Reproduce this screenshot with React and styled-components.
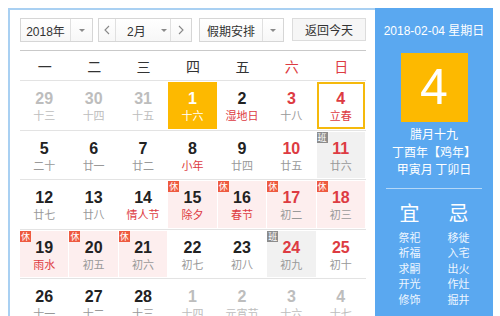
import React from 'react'
import styled, { createGlobalStyle } from 'styled-components'

const GlobalStyle = createGlobalStyle`
  html, body {
    margin: 0;
    padding: 0;
    overflow: hidden;
    background: #fff;
  }
  body {
    font-family: "Liberation Sans", "Noto Sans CJK SC", sans-serif;
    color: #333;
  }
`

const RED = '#dd3b42'
const BLUE = '#5aa8f0'
const ORANGE = '#fdb900'

const Page = styled.div`
  padding: 8px 0 0 8px;
  height: 316px;
  box-sizing: border-box;
`

const Frame = styled.div`
  display: flex;
  align-items: stretch;
  height: 100%;
`

const LeftPanel = styled.section`
  width: 367px;
  box-sizing: border-box;
  border-top: 2px solid #a9d0f2;
  border-left: 2px solid #a9d0f2;
  padding: 8px 9px 0 10px;
  background: #fff;
`

const RightPanel = styled.aside`
  width: 118px;
  background: ${BLUE};
  color: #fff;
  display: flex;
  flex-direction: column;
  align-items: center;
  padding-top: 15px;
  box-sizing: border-box;
  font-family: "Liberation Sans", "Noto Sans CJK SC", sans-serif;
`

const Toolbar = styled.div`
  display: flex;
  height: 24px;
  padding-bottom: 8px;
  border-bottom: 1px solid #c9c9c9;
`

const SelectBox = styled.div`
  display: flex;
  width: ${p => p.$w}px;
  margin-right: ${p => p.$mr || 0}px;
  box-sizing: border-box;
  border: 1px solid #d6d6d6;
  background: linear-gradient(#ffffff, #f7f7f7);
  font-size: 12px;
  color: #333;
`

const Part = styled.div`
  display: flex;
  align-items: center;
  justify-content: ${p => p.$justify || 'center'};
  width: ${p => (p.$w ? p.$w + 'px' : 'auto')};
  flex: ${p => (p.$w ? 'none' : 1)};
  padding: ${p => p.$pad || 0};
  border-right: ${p => (p.$sep ? '1px solid #e0e0e0' : 'none')};
  font-family: ${p => (p.$cjk ? '"Noto Sans CJK SC", sans-serif' : 'inherit')};
  box-sizing: border-box;
`

const Caret = styled.span`
  width: 0;
  height: 0;
  border-left: 3px solid transparent;
  border-right: 3px solid transparent;
  border-top: 3px solid #8a8a8a;
  margin-left: ${p => p.$ml || 0}px;
`

const TodayButton = styled.button`
  width: 74px;
  height: 23px;
  margin-top: 0;
  border: 1px solid #dcdcdc;
  background: #f6f6f6;
  font-family: "Noto Sans CJK SC", sans-serif;
  font-size: 12px;
  color: #333;
  padding: 0;
`

const WeekHead = styled.div`
  display: grid;
  grid-template-columns: repeat(7, 1fr);
  height: 30px;
  border-bottom: 1px solid #e3e3e3;
  box-sizing: border-box;
`

const WeekName = styled.div`
  display: flex;
  align-items: center;
  justify-content: center;
  font-family: "Noto Sans CJK SC", sans-serif;
  font-size: 14px;
  color: ${p => (p.$red ? RED : '#333')};
`

const Row = styled.div`
  display: grid;
  grid-template-columns: repeat(7, 1fr);
  height: 49.5px;
  border-bottom: 1px solid #e3e3e3;
  box-sizing: border-box;
`

const Cell = styled.div`
  padding: 1px 1px 1px 0;
  box-sizing: border-box;
`

const bgFor = p => {
  if (p.$sel) return ORANGE
  if (p.$badge === '休') return '#fdeeee'
  if (p.$badge === '班') return '#f1f1f1'
  return 'transparent'
}

const CellInner = styled.div`
  position: relative;
  height: 100%;
  box-sizing: border-box;
  background: ${bgFor};
  border: ${p => (p.$today ? '2px solid #f5b90c' : 'none')};
  display: flex;
  flex-direction: column;
  align-items: center;
  padding-top: ${p => (p.$today ? 6 : 8)}px;
`

const DayNum = styled.div`
  font-size: 16px;
  line-height: 18px;
  font-weight: 700;
  color: ${p => p.$color};
`

const Lunar = styled.div`
  font-family: "Noto Sans CJK SC", sans-serif;
  font-size: 11px;
  line-height: 15px;
  color: ${p => p.$color};
`

const Badge = styled.span`
  position: absolute;
  top: 0;
  left: 0;
  width: 11px;
  height: 11px;
  background: ${p => (p.$type === '休' ? '#ee5a40' : '#8c8c8c')};
  color: #fff;
  font-family: "Noto Sans CJK SC", sans-serif;
  font-size: 9px;
  line-height: 11px;
  text-align: center;
`

const DateLine = styled.div`
  font-size: 12px;
  line-height: 16px;
  white-space: nowrap;
`

const BigDay = styled.div`
  width: 67px;
  height: 69px;
  margin-top: 14px;
  background: ${ORANGE};
  font-size: 50px;
  line-height: 69px;
  text-align: center;
  color: #fff;
`

const Info = styled.div`
  margin-top: 3px;
  text-align: center;
`

const InfoLine = styled.div`
  font-family: "Noto Sans CJK SC", sans-serif;
  font-size: 12px;
  line-height: 17.5px;
  white-space: nowrap;
`

const Divider = styled.div`
  width: 96px;
  height: 1px;
  background: rgba(255, 255, 255, 0.55);
  margin-top: 10px;
`

const Almanac = styled.div`
  display: grid;
  grid-template-columns: 49px 49px;
  margin-top: 12px;
  text-align: center;
`

const AlmanacHead = styled.div`
  font-family: "Noto Sans CJK SC", sans-serif;
  font-size: 20px;
  line-height: 24px;
  margin-bottom: 5px;
`

const AlmanacItem = styled.div`
  font-family: "Noto Sans CJK SC", sans-serif;
  font-size: 11px;
  line-height: 15.5px;
  color: #eef6ff;
`

const Chevron = ({ dir }) => (
  <svg width="6" height="10" viewBox="0 0 6 10">
    <path
      d={dir === 'left' ? 'M5 1 L1 5 L5 9' : 'M1 1 L5 5 L1 9'}
      fill="none"
      stroke="#888"
      strokeWidth="1.1"
    />
  </svg>
)

const weekNames = ['一', '二', '三', '四', '五', '六', '日']

// o: other month, w: weekend red number, r: red lunar, b: badge, s: selected, t: today
const weeks = [
  [
    { d: 29, l: '十三', o: 1 }, { d: 30, l: '十四', o: 1 }, { d: 31, l: '十五', o: 1 },
    { d: 1, l: '十六', s: 1 }, { d: 2, l: '湿地日', r: 1 }, { d: 3, l: '十八', w: 1 },
    { d: 4, l: '立春', w: 1, r: 1, t: 1 },
  ],
  [
    { d: 5, l: '二十' }, { d: 6, l: '廿一' }, { d: 7, l: '廿二' },
    { d: 8, l: '小年', r: 1 }, { d: 9, l: '廿四' }, { d: 10, l: '廿五', w: 1 },
    { d: 11, l: '廿六', w: 1, b: '班' },
  ],
  [
    { d: 12, l: '廿七' }, { d: 13, l: '廿八' }, { d: 14, l: '情人节', r: 1 },
    { d: 15, l: '除夕', r: 1, b: '休' }, { d: 16, l: '春节', r: 1, b: '休' },
    { d: 17, l: '初二', w: 1, b: '休' }, { d: 18, l: '初三', w: 1, b: '休' },
  ],
  [
    { d: 19, l: '雨水', r: 1, b: '休' }, { d: 20, l: '初五', b: '休' }, { d: 21, l: '初六', b: '休' },
    { d: 22, l: '初七' }, { d: 23, l: '初八' }, { d: 24, l: '初九', w: 1, b: '班' },
    { d: 25, l: '初十', w: 1 },
  ],
  [
    { d: 26, l: '十一' }, { d: 27, l: '十二' }, { d: 28, l: '十三' },
    { d: 1, l: '十四', o: 1 }, { d: 2, l: '元宵节', o: 1 }, { d: 3, l: '十六', o: 1 },
    { d: 4, l: '十七', o: 1 },
  ],
]

const yi = ['祭祀', '祈福', '求嗣', '开光', '修饰']
const ji = ['移徙', '入宅', '出火', '作灶', '掘井']

const numColor = c => {
  if (c.s) return '#fff'
  if (c.o) return '#bdbdbd'
  if (c.w) return RED
  return '#222'
}

const lunarColor = c => {
  if (c.s) return '#fff'
  if (c.o) return '#bdbdbd'
  if (c.r) return RED
  return '#999'
}

const App = () => {
  return (
    <Page>
      <GlobalStyle />
      <Frame>
        <LeftPanel>
          <Toolbar>
            <SelectBox $w={73} $mr={5}>
              <Part $w={50} $sep>2018年</Part>
              <Part><Caret /></Part>
            </SelectBox>
            <SelectBox $w={94} $mr={7}>
              <Part $w={17} $sep><Chevron dir="left" /></Part>
              <Part $sep $justify="flex-start" $pad="0 0 0 11px">
                2月<Caret $ml={15} />
              </Part>
              <Part $w={20}><Chevron dir="right" /></Part>
            </SelectBox>
            <SelectBox $w={85} $mr={8}>
              <Part $w={63} $sep $cjk>假期安排</Part>
              <Part><Caret /></Part>
            </SelectBox>
            <TodayButton>返回今天</TodayButton>
          </Toolbar>
          <WeekHead>
            {weekNames.map((n, i) => (
              <WeekName key={n} $red={i > 4}>{n}</WeekName>
            ))}
          </WeekHead>
          {weeks.map((week, i) => (
            <Row key={i}>
              {week.map((c, j) => (
                <Cell key={j}>
                  <CellInner $sel={c.s} $today={c.t} $badge={c.b}>
                    {c.b && <Badge $type={c.b}>{c.b}</Badge>}
                    <DayNum $color={numColor(c)}>{c.d}</DayNum>
                    <Lunar $color={lunarColor(c)}>{c.l}</Lunar>
                  </CellInner>
                </Cell>
              ))}
            </Row>
          ))}
        </LeftPanel>
        <RightPanel>
          <DateLine>2018-02-04 星期日</DateLine>
          <BigDay>4</BigDay>
          <Info>
            <InfoLine>腊月十九</InfoLine>
            <InfoLine>丁酉年【鸡年】</InfoLine>
            <InfoLine>甲寅月 丁卯日</InfoLine>
          </Info>
          <Divider />
          <Almanac>
            <AlmanacHead>宜</AlmanacHead>
            <AlmanacHead>忌</AlmanacHead>
            <div>
              {yi.map(t => <AlmanacItem key={t}>{t}</AlmanacItem>)}
            </div>
            <div>
              {ji.map(t => <AlmanacItem key={t}>{t}</AlmanacItem>)}
            </div>
          </Almanac>
        </RightPanel>
      </Frame>
    </Page>
  )
}

export default App
